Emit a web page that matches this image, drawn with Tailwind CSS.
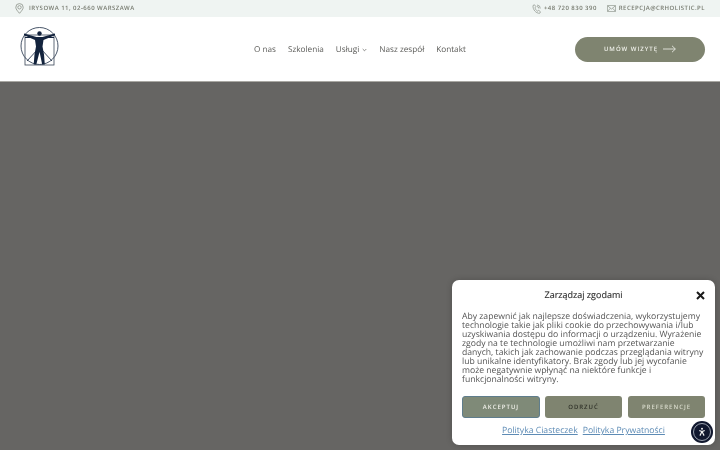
<!DOCTYPE html>
<html lang="pl"><head><meta charset="utf-8"><script src="https://cdn.jsdelivr.net/npm/@tailwindcss/browser@4"></script></head>
<body class="m-0 overflow-hidden">
<div class="relative w-[720px] h-[450px] overflow-hidden bg-[#666563] font-['Open_Sans',sans-serif] [text-rendering:geometricPrecision] blur-[0.3px]">
  <div class="h-[17px] bg-[#eff4f2] flex items-center justify-between pl-[15px] pr-[15px] text-[6px] tracking-[0.47px] text-[#777b70] font-semibold">
    <div class="flex items-center gap-[5px]">
      <svg width="9" height="11" viewBox="0 0 9 11" fill="none" stroke="#8a9088" stroke-width="0.8"><path d="M4.5 10.3C2.5 8 .8 6.200.8 4.300a3.700 3.700 0 0 1 7.400 0C8.200 6.200 6.500 8 4.500 10.300Z"/><circle cx="4.500" cy="4.300" r="1.700"/></svg>
      <span>IRYSOWA 11, 02-660 WARSZAWA</span>
    </div>
    <div class="flex items-center">
      <svg class="mr-[3px]" width="9" height="10" viewBox="0 0 9 10" fill="none" stroke="#8a9088" stroke-width="0.7"><path d="M1 1.500 2.500.8l1.500 2-1 1c.4 1.500 1.300 2.700 2.700 3.400l1-.9 1.800 1.500-.8 1.500C4 9.500.6 5.500 1 1.500Z"/><path d="M5 1a3.500 3.500 0 0 1 3.300 3.500M5 2.500a2 2 0 0 1 1.800 2"/></svg>
      <span>+48 720 830 390</span>
      <svg class="ml-[10px] mr-[3px]" width="9" height="7" viewBox="0 0 9 7" fill="none" stroke="#8a9088" stroke-width="0.7"><rect x=".4" y=".4" width="8.200" height="6.200" rx=".6"/><path d="M.6.800 4.500 4l3.900-3.200M.6 6.300l2.700-3M8.400 6.300l-2.700-3"/></svg>
      <span>RECEPCJA@CRHOLISTIC.PL</span>
    </div>
  </div>
  <header class="h-[64px] bg-white border-b border-[#a9a8a3] box-content flex items-center relative">
    <svg class="absolute left-[20px] top-[10px]" width="40" height="40" viewBox="0 0 40 40" fill="none">
      <circle cx="19.500" cy="19" r="18.500" stroke="#1c2c44" stroke-width="0.800"/>
      <rect x="5" y="8" width="29" height="30" stroke="#3a4658" stroke-width="0.800"/>
      <circle cx="19.500" cy="6.500" r="2.200" fill="#13233d"/>
      <path d="M4 6.500 16.500 10h6L35 6.500v1.800L23.500 13l-1 6.500 1.500 8 .8 10h-2.600L20 27l-.5-2-.5 2-2.700 10.500h-2.600l.8-10 1.500-8-1-6.500L4 8.300Z" fill="#13233d"/>
      <path d="M5 10.500h29" stroke="#13233d" stroke-width="1"/>
      <path d="M18 22 7 34M21 22l11 12" stroke="#13233d" stroke-width="0.800"/>
    </svg>
    <nav class="absolute left-[254px] top-[25px] flex items-center text-[8.200px] text-[#5b5b58] leading-[16px]">
      <span>O nas</span>
      <span class="ml-[12px]">Szkolenia</span>
      <span class="ml-[12px]">Usługi</span>
      <svg class="ml-[3px]" width="5" height="4" viewBox="0 0 5 4" fill="none" stroke="#5b5b58" stroke-width="0.700"><path d="m.7 1 1.800 1.800L4.300 1"/></svg>
      <span class="ml-[12px]">Nasz zespół</span>
      <span class="ml-[12px]">Kontakt</span>
    </nav>
    <div class="absolute left-[575px] top-[19.500px] w-[130px] h-[25px] rounded-full bg-[#7f8470] flex items-center justify-center gap-[5px] text-[6px] font-semibold tracking-[1px] text-[#f0f1ea]">
      <span>UMÓW WIZYTĘ</span>
      <svg width="13" height="8" viewBox="0 0 13 8" fill="none" stroke="#f3f4ee" stroke-width="0.800"><path d="M0 4h12.200M9 .8 12.400 4 9 7.200"/></svg>
    </div>
  </header>
  <div class="absolute left-[452px] top-[280px] w-[263px] h-[165px] bg-white rounded-[7px] shadow-[0_0_6px_rgba(0,0,0,0.2)] px-[10px]">
    <div class="relative h-[29px] pt-[8px] text-center text-[9px] leading-[14px] text-[#333] [-webkit-text-stroke:0.15px_#333]">Zarządzaj zgodami
      <svg class="absolute right-0 top-[11px]" width="9" height="9" viewBox="0 0 9 9" fill="none" stroke="#1a1a1a" stroke-width="2"><path d="m1 1 7 7M8 1 1 8"/></svg>
    </div>
    <p class="mt-[3px] w-[243px] text-[8.650px] leading-[9px] text-[#555]">Aby zapewnić jak najlepsze doświadczenia, wykorzystujemy technologie takie jak pliki cookie do przechowywania i/lub uzyskiwania dostępu do informacji o urządzeniu. Wyrażenie zgody na te technologie umożliwi nam przetwarzanie danych, takich jak zachowanie podczas przeglądania witryny lub unikalne identyfikatory. Brak zgody lub jej wycofanie może negatywnie wpłynąć na niektóre funkcje i funkcjonalności witryny.</p>
    <div class="mt-[12px] flex text-[6px] font-semibold tracking-[1px] text-center leading-[20px]">
      <div class="w-[78px] h-[22px] rounded-[3px] bg-[#7f8a78] border border-[#5f7d8c] text-[#f0f1ea]">AKCEPTUJ</div>
      <div class="ml-[5px] w-[77px] h-[22px] rounded-[3px] bg-[#7f8470] text-[#2f3128] leading-[22px]">ODRZUĆ</div>
      <div class="ml-[6px] w-[77px] h-[22px] rounded-[3px] bg-[#7f8470] text-[#d8dacb] leading-[22px]">PREFERENCJE</div>
    </div>
    <div class="mt-[5px] flex justify-center gap-[5px] text-[8.650px] leading-[14px] text-[#5d8bb5] underline">
      <span>Polityka Ciasteczek</span><span>Polityka Prywatności</span>
    </div>
  </div>
  <div class="absolute left-[691px] top-[421px] w-[22px] h-[22px] rounded-full bg-[#10172e] flex items-center justify-center">
    <div class="w-[18px] h-[18px] rounded-full border border-[#9ca3af] flex items-center justify-center">
      <svg width="10" height="10" viewBox="0 0 11 11" fill="none" stroke="#f2f2f2" stroke-width="1.300"><circle cx="5.500" cy="2" r="1.100" fill="#f2f2f2" stroke="none"/><path d="M2.500 3.800 5.500 5l3-1.200M5.500 5 3.200 9.500M5.500 5l2.300 4.500"/></svg>
    </div>
  </div>
</div>
</body></html>
